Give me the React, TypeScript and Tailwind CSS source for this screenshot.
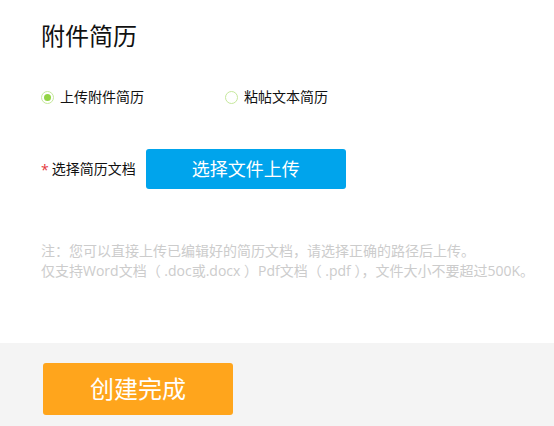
import { useState } from "react";

const Radio = ({ checked, label, onClick }: { checked: boolean; label: string; onClick: () => void }) => (
  <label onClick={onClick} className="flex items-center gap-[6px] cursor-pointer">
    <span className="flex items-center justify-center w-[13px] h-[13px] rounded-full border-[1.5px] border-[#c6e89c] bg-white">
      {checked && <span className="w-[7px] h-[7px] rounded-full bg-[#92d444]" />}
    </span>
    <span className="text-[14px] leading-[20px] text-[#111]">{label}</span>
  </label>
);

const App = () => {
  const [mode, setMode] = useState<"file" | "text">("file");

  return (
    <div className="w-[554px] h-[426px] bg-white flex flex-col font-['Open_Sans','Noto_Sans_CJK_SC',sans-serif]">
      {/* Form */}
      <div className="flex-1 pl-[41px]">
        <h1 className="pt-[20px] text-[24px] leading-[32px] font-normal text-[#111]">附件简历</h1>

        {/* Resume type */}
        <div className="mt-[35px] flex items-center">
          <div className="w-[184px]">
            <Radio checked={mode === "file"} label="上传附件简历" onClick={() => setMode("file")} />
          </div>
          <Radio checked={mode === "text"} label="粘帖文本简历" onClick={() => setMode("text")} />
        </div>

        {/* Upload */}
        <div className="mt-[42px] flex items-center">
          <span className="text-[14px] text-[#e4393c] mr-[3px]">*</span>
          <span className="text-[14px] leading-[20px] text-[#111]">选择简历文档</span>
          <button className="ml-[10px] w-[200px] h-[40px] rounded-[3px] bg-[#00a4ec] text-white text-[18px]">
            选择文件上传
          </button>
        </div>

        {/* Note */}
        <div className="mt-[52px] text-[14px] leading-[20px] text-[#cccccc]">
          <p>注：您可以直接上传已编辑好的简历文档，请选择正确的路径后上传。</p>
          <p>仅支持Word文档（ .doc或.docx ）Pdf文档（ .pdf ），文件大小不要超过500K。</p>
        </div>
      </div>

      {/* Footer */}
      <div className="h-[83px] bg-[#f4f4f4] pt-[20px] pl-[43px]">
        <button className="w-[190px] h-[52px] rounded-[3px] bg-[#ffa51c] text-white text-[24px]">创建完成</button>
      </div>
    </div>
  );
};

export default App;
